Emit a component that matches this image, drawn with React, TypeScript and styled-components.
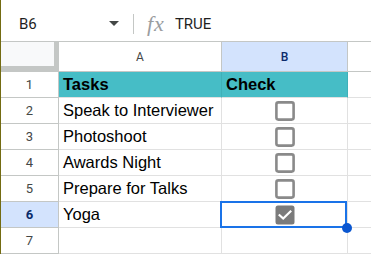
import React from "react";
import styled, { createGlobalStyle, css } from "styled-components";

const GlobalStyle = createGlobalStyle`
  html, body { margin: 0; padding: 0; background: #ffffff; overflow: hidden; }
  body { font-family: "Liberation Sans", Arial, sans-serif; }
  * { box-sizing: border-box; }
`;

const Frame = styled.div`
  width: 371px;
  height: 254px;
  border-left: 1px solid #736b12;
  display: flex;
  flex-direction: column;
  background: #fff;
`;

const FormulaBar = styled.div`
  height: 42px;
  border-bottom: 1px solid #c4c7c5;
  display: flex;
  align-items: center;
  padding-top: 6px;
  font-family: Roboto, "Liberation Sans", sans-serif;
  font-size: 15px;
  color: #1f1f1f;
`;

const NameBox = styled.div`
  width: 132px;
  display: flex;
  align-items: center;
  justify-content: space-between;
  padding: 0 14px 0 18px;
`;

const Caret = styled.span`
  width: 0;
  height: 0;
  border-left: 5px solid transparent;
  border-right: 5px solid transparent;
  border-top: 5px solid #444746;
`;

const Divider = styled.span`
  width: 1px;
  height: 20px;
  background: #c4c7c5;
`;

const FxIcon = styled.span`
  margin-left: 13px;
  font-family: "Liberation Serif", serif;
  font-style: italic;
  font-size: 22px;
  letter-spacing: 1px;
  color: #9a9d9f;
  line-height: 1;
`;

const Value = styled.span`
  margin-left: 10px;
`;

const Grid = styled.div`
  position: relative;
  display: grid;
  grid-template-columns: 58px 163px 126px 1fr;
  grid-template-rows: 30px repeat(7, 26px);
`;

const Corner = styled.div`
  background: #f8f9fa;
  border-right: 5px solid #c4c7c5;
  border-bottom: 6px solid #c4c7c5;
`;

const ColHeader = styled.div<{ $active?: boolean; $last?: boolean }>`
  display: flex;
  align-items: center;
  justify-content: center;
  font-family: Roboto, "Liberation Sans", sans-serif;
  font-size: 12px;
  color: #444746;
  background: #fff;
  border-bottom: 1px solid #c4c7c5;
  border-right: ${(p) => (p.$last ? "none" : "1px solid #c4c7c5")};
  ${(p) =>
    p.$active &&
    css`
      background: #d3e3fd;
      color: #0b2b6b;
      font-weight: 500;
    `}
`;

const RowHeader = styled.div<{ $active?: boolean }>`
  display: flex;
  align-items: center;
  justify-content: center;
  font-family: Roboto, "Liberation Sans", sans-serif;
  font-size: 13px;
  color: #444746;
  background: #fff;
  border-right: 1px solid #c4c7c5;
  border-bottom: 1px solid #c4c7c5;
  ${(p) =>
    p.$active &&
    css`
      background: #d3e3fd;
      color: #0b2b6b;
      font-weight: 700;
    `}
`;

const Cell = styled.div<{ $header?: boolean; $center?: boolean; $last?: boolean }>`
  position: relative;
  display: flex;
  align-items: center;
  justify-content: ${(p) => (p.$center ? "center" : "flex-start")};
  padding-left: 4px;
  font-size: 16.5px;
  color: #000;
  white-space: nowrap;
  border-bottom: 1px solid #e1e1e1;
  border-right: ${(p) => (p.$last ? "none" : "1px solid #e1e1e1")};
  ${(p) =>
    p.$header &&
    css`
      background: #46bdc6;
      font-weight: 700;
      border-bottom-color: #e1e1e1;
      border-right-color: #3fb0b8;
    `}
  ${(p) => p.$center && css`padding-left: 1px;`}
`;

const Selection = styled.div`
  position: absolute;
  z-index: 5;
  left: -2px;
  top: -1px;
  width: 127px;
  height: 27px;
  border: 2px solid #1a73e8;
  pointer-events: none;
`;

const Handle = styled.div`
  position: absolute;
  z-index: 6;
  left: 120px;
  top: 21px;
  width: 10px;
  height: 10px;
  border-radius: 50%;
  background: #0b57d0;
`;

const CheckBox = ({ checked }: { checked: boolean }) => (
  <svg width="20" height="20" viewBox="0 0 20 20">
    {checked ? (
      <>
        <rect x="0.5" y="0.5" width="19" height="19" rx="2.5" fill="#7b7b7b" />
        <path d="M4.6 10.2 L8.2 13.6 L15.4 6.6" fill="none" stroke="#fff" strokeWidth="2.2" strokeLinecap="square" />
      </>
    ) : (
      <rect x="1.4" y="1.4" width="17.2" height="17.2" rx="2" fill="#fff" stroke="#8a8a8a" strokeWidth="2.6" />
    )}
  </svg>
);

const rows = [
  { task: "Speak to Interviewer", done: false },
  { task: "Photoshoot", done: false },
  { task: "Awards Night", done: false },
  { task: "Prepare for Talks", done: false },
  { task: "Yoga", done: true },
];

export default function App() {
  return (
    <>
      <GlobalStyle />
      <Frame>
        <FormulaBar>
          <NameBox>
            <span>B6</span>
            <Caret />
          </NameBox>
          <Divider />
          <FxIcon>fx</FxIcon>
          <Value>TRUE</Value>
        </FormulaBar>
        <Grid>
          <Corner />
          <ColHeader>A</ColHeader>
          <ColHeader $active>B</ColHeader>
          <ColHeader $last />

          <RowHeader>1</RowHeader>
          <Cell $header>Tasks</Cell>
          <Cell $header>Check</Cell>
          <Cell $last />

          {rows.map((r, i) => {
            const n = i + 2;
            const active = n === 6;
            return (
              <React.Fragment key={n}>
                <RowHeader $active={active}>{n}</RowHeader>
                <Cell>{r.task}</Cell>
                <Cell $center>
                  <CheckBox checked={r.done} />
                  {active && <Selection />}
                  {active && <Handle />}
                </Cell>
                <Cell $last />
              </React.Fragment>
            );
          })}

          <RowHeader>7</RowHeader>
          <Cell />
          <Cell />
          <Cell $last />
        </Grid>
      </Frame>
    </>
  );
}
